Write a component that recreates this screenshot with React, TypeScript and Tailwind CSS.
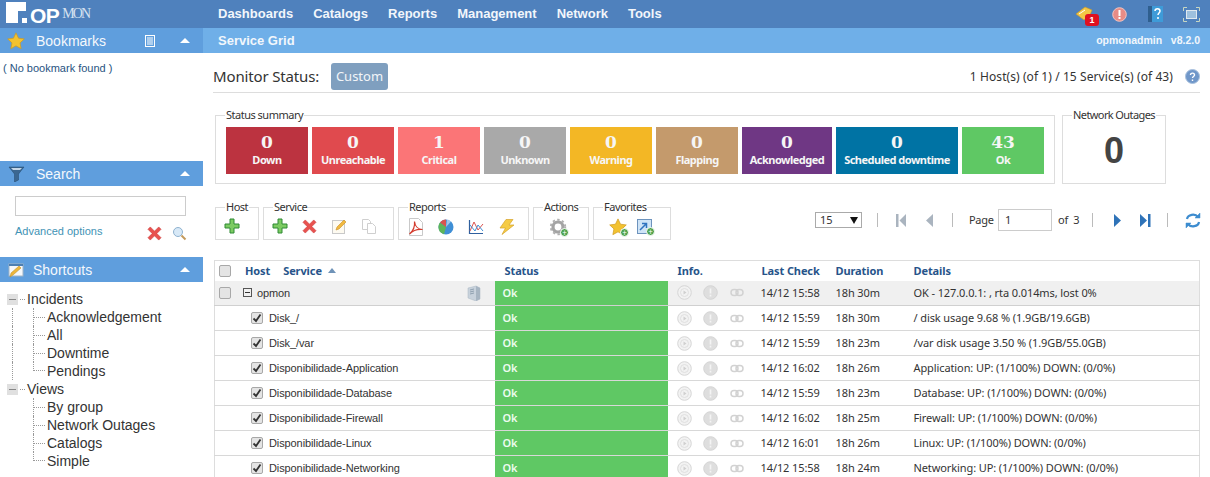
import { ReactNode } from "react";

const sans = "font-['Liberation_Sans',Arial,sans-serif]";
const ui = "font-['Noto_Sans',Tahoma,sans-serif]";

const tiles = [
  { n: "0", label: "Down", bg: "bg-[#bc3340]", w: "w-[82px]" },
  { n: "0", label: "Unreachable", bg: "bg-[#e04a4e]", w: "w-[82px]" },
  { n: "1", label: "Critical", bg: "bg-[#fb7577]", w: "w-[82px]" },
  { n: "0", label: "Unknown", bg: "bg-[#a9a9a9]", w: "w-[82px]" },
  { n: "0", label: "Warning", bg: "bg-[#f3b725]", w: "w-[82px]" },
  { n: "0", label: "Flapping", bg: "bg-[#c49a6c]", w: "w-[82px]" },
  { n: "0", label: "Acknowledged", bg: "bg-[#6f3784]", w: "w-[90px]" },
  { n: "0", label: "Scheduled downtime", bg: "bg-[#0073a4]", w: "w-[122px]" },
  { n: "43", label: "Ok", bg: "bg-[#5fc864]", w: "w-[82px]" },
];

const services = [
  ["Disk_/", "14/12 15:59", "18h 30m", "/ disk usage 9.68 % (1.9GB/19.6GB)"],
  ["Disk_/var", "14/12 15:59", "18h 23m", "/var disk usage 3.50 % (1.9GB/55.0GB)"],
  ["Disponibilidade-Application", "14/12 16:02", "18h 26m", "Application: UP: (1/100%) DOWN: (0/0%)"],
  ["Disponibilidade-Database", "14/12 15:59", "18h 23m", "Database: UP: (1/100%) DOWN: (0/0%)"],
  ["Disponibilidade-Firewall", "14/12 16:02", "18h 25m", "Firewall: UP: (1/100%) DOWN: (0/0%)"],
  ["Disponibilidade-Linux", "14/12 16:01", "18h 26m", "Linux: UP: (1/100%) DOWN: (0/0%)"],
  ["Disponibilidade-Networking", "14/12 15:58", "18h 24m", "Networking: UP: (1/100%) DOWN: (0/0%)"],
];

/* icons */
const Star = ({ s = 18 }: { s?: number }) => (
  <svg width={s} height={s} viewBox="0 0 20 20">
    <path d="M10 1l2.8 5.9 6.4.8-4.7 4.4 1.2 6.4-5.7-3.1-5.7 3.1 1.2-6.4L.8 7.7l6.4-.8z" fill="#f2c230" stroke="#d19a1c" strokeWidth="0.8" />
  </svg>
);
const Plus = () => (
  <svg width="16" height="16" viewBox="0 0 16 16">
    <path d="M6 1h4v5h5v4h-5v5H6v-5H1V6h5z" fill="#7ccb62" stroke="#2f8a34" strokeWidth="1" />
  </svg>
);
const Cross = ({ s = 15 }: { s?: number }) => (
  <svg width={s} height={s} viewBox="0 0 16 16">
    <path d="M3.5 1L8 5.5 12.5 1 15 3.5 10.500 8l4.500 4.500L12.500 15 8 10.500 3.500 15 1 12.500 5.500 8 1 3.500z" fill="#e8524f" stroke="#c93a3a" strokeWidth="0.6" />
  </svg>
);
const Note = () => (
  <svg width="16" height="16" viewBox="0 0 16 16">
    <rect x="1.500" y="2.500" width="12" height="13" fill="#fdfaf0" stroke="#c9c9c9" />
    <path d="M5 12l1-3 7-7 2 2-7 7z" fill="#f1b93f" stroke="#c98f26" strokeWidth="0.6" />
  </svg>
);
const Copy = () => (
  <svg width="16" height="16" viewBox="0 0 16 16" fill="#fff" stroke="#cfcfcf">
    <path d="M1.500 1.500h6l2 2v8h-8z" />
    <path d="M6.500 5.500h5l3 3v7h-8z" />
  </svg>
);
const Pdf = () => (
  <svg width="16" height="18" viewBox="0 0 16 18" fill="none">
    <path d="M1.500 .5h9l4 4v13h-13z" fill="#fff" stroke="#c9c9c9" />
    <path d="M1.500 16C5 13 7 8 6.500 3.500 7 8 10 11.500 14.500 11.500 10 11 5 12.500 1.500 16z" stroke="#d33a2c" strokeWidth="1.200" />
  </svg>
);
const Pie = () => (
  <svg width="16" height="16" viewBox="0 0 16 16">
    <circle cx="8" cy="8" r="7.500" fill="#3f8fd6" />
    <path d="M8 8L2 3.500A7.500 7.500 0 0 0 6 15.300z" fill="#5db55a" />
    <path d="M8 8V.5A7.500 7.500 0 0 0 2 3.500z" fill="#d9534f" />
    <path d="M8 8l1-7.400A7.500 7.500 0 0 1 13 2.500z" fill="#fff" opacity="0.5" />
  </svg>
);
const ChartIcon = () => (
  <svg width="16" height="16" viewBox="0 0 16 16" fill="none">
    <path d="M1.500 1v13.500H15" stroke="#2f5f9e" strokeWidth="1.200" />
    <path d="M2 12L6 3l4 8 5-6" stroke="#d9534f" />
    <path d="M2 6l5 6 3-6 5 6" stroke="#3f8fd6" />
  </svg>
);
const Bolt = () => (
  <svg width="17" height="16" viewBox="0 0 17 16">
    <path d="M8 .5h7L11 6h5L4 15.500 7.500 9H2z" fill="#f5cb45" stroke="#d6a32a" strokeWidth="0.7" />
  </svg>
);
const Badge = ({ color = "#4fa34f" }: { color?: string }) => (
  <span className="absolute right-[-2px] bottom-[-1px] flex h-[9px] w-[9px] items-center justify-center rounded-full border border-white text-[8px] leading-none text-white" style={{ background: color }}>
    +
  </span>
);
const Gear = () => (
  <span className="relative inline-flex">
    <svg width="18" height="18" viewBox="0 0 18 18">
      <circle cx="9" cy="9" r="5" fill="none" stroke="#a4a4a4" strokeWidth="3.200" />
      <circle cx="9" cy="9" r="7.200" fill="none" stroke="#b0b0b0" strokeWidth="2" strokeDasharray="2.400 2.300" />
    </svg>
    <Badge />
  </span>
);
const StarPlus = () => (
  <span className="relative inline-flex">
    <Star />
    <Badge />
  </span>
);
const ImgPlus = () => (
  <span className="relative inline-flex">
    <svg width="16" height="16" viewBox="0 0 16 16">
      <rect x=".5" y=".5" width="14" height="14" fill="#cfe4f7" stroke="#6d93bd" />
      <path d="M3 11l6-6M5 4.500h4.500V9" fill="none" stroke="#2f73c0" strokeWidth="1.500" />
    </svg>
    <Badge />
  </span>
);
const Play = () => (
  <svg width="15" height="15" viewBox="0 0 15 15">
    <circle cx="7.500" cy="7.500" r="6.800" fill="#f2f2f2" stroke="#d6d6d6" />
    <circle cx="7.500" cy="7.500" r="4" fill="none" stroke="#e0e0e0" />
    <path d="M6.500 5.500l3 2-3 2z" fill="#cfcfcf" />
  </svg>
);
const Info = () => (
  <svg width="15" height="15" viewBox="0 0 15 15">
    <circle cx="7.500" cy="7.500" r="6.800" fill="#dedede" stroke="#d4d4d4" />
    <rect x="6.700" y="3.500" width="1.600" height="5" fill="#f4f4f4" />
    <rect x="6.700" y="9.700" width="1.600" height="1.800" fill="#f4f4f4" />
  </svg>
);
const Chain = () => (
  <svg width="14" height="9" viewBox="0 0 14 9" fill="none" stroke="#d2d2d2" strokeWidth="1.500">
    <rect x="1" y="1.500" width="7" height="6" rx="3" />
    <rect x="6" y="1.500" width="7" height="6" rx="3" />
  </svg>
);
const Caret = () => <span className="h-0 w-0 border-x-[5px] border-b-[5px] border-x-transparent border-b-white" />;
const Check = ({ on }: { on?: boolean }) => (
  <span className="flex h-[12px] w-[12px] items-center justify-center rounded-[2px] border border-[#a8a8a8] bg-[#e4e4e4]">
    {on && (
      <svg width="10" height="10" viewBox="0 0 10 10" fill="none">
        <path d="M1.500 5.500L4 8l4.500-6.500" stroke="#333" strokeWidth="1.800" />
      </svg>
    )}
  </span>
);

function SideHead({ icon, title, extra, indent }: { icon: ReactNode; title: string; extra?: ReactNode; indent: string }) {
  return (
    <div className={`flex h-[25px] items-center bg-[#5f9edd] pl-[7px] pr-[13px] text-[14px] text-[#f4f8fc] ${sans}`}>
      <span className="flex w-[18px] justify-center">{icon}</span>
      <span className={`flex-1 pt-px ${indent}`}>{title}</span>
      {extra}
      <Caret />
    </div>
  );
}

function TreeRow({ label, parent, last, trunk }: { label: string; parent?: boolean; last?: boolean; trunk?: boolean }) {
  return (
    <div className="flex h-[18px] items-center">
      {parent ? (
        <>
          <span className="relative ml-[7px] flex h-[11px] w-[11px] items-center justify-center bg-[#e0e0e0]">
            <span className="h-px w-[7px] bg-[#888]" />
          </span>
          <span className="ml-[2px] w-[5px] border-t border-dotted border-[#999]" />
          <span className="ml-[2px]">{label}</span>
        </>
      ) : (
        <>
          <span className={`ml-[12px] h-full w-[21px] ${trunk ? "border-l border-dotted border-[#999]" : ""}`} />
          <span className={`w-[14px] self-start border-l border-dotted border-[#999] ${last ? "h-[9px]" : "flex h-full items-center"}`}>
            {last ? <span className="mt-[8px] block w-[11px] border-t border-dotted border-[#999]" /> : <span className="w-[11px] border-t border-dotted border-[#999]" />}
          </span>
          <span>{label}</span>
        </>
      )}
    </div>
  );
}

function Sidebar() {
  return (
    <aside className={`w-[203px] shrink-0 ${sans}`}>
      <SideHead
        icon={<Star />}
        title="Bookmarks"
        indent="pl-[11px]"
        extra={
          <svg className="mr-[25px]" width="10" height="12" viewBox="0 0 10 12" fill="none" stroke="#fff">
            <rect x=".5" y=".5" width="9" height="11" />
            <path d="M2 3h6M2 5h6M2 7h6M2 9h6" />
          </svg>
        }
      />
      <div className="h-[108px] pl-[3px] pt-[9px] text-[11px] leading-[13px] text-[#27537f]">( No bookmark found )</div>

      <SideHead
        icon={
          <svg width="17" height="16" viewBox="0 0 17 16">
            <path d="M1 1h15l-5.500 7v6l-4 2V8z" fill="#3b6791" stroke="#23486d" strokeWidth="0.5" />
            <path d="M3 2h11l-2 2H5z" fill="#c4d7e8" />
          </svg>
        }
        title="Search"
        indent="pl-[11px]"
      />
      <div className="h-[71px] pl-[15px] pr-[16px] pt-[10px]">
        <div className="mr-px h-[20px] border border-[#ccc] bg-white" />
        <div className="mt-[5px] flex items-center">
          <span className="flex-1 text-[11px] text-[#3f93b5]">Advanced options</span>
          <span className="mr-[10px] mt-[5px] flex">
            <Cross />
          </span>
          <svg className="mt-[5px]" width="15" height="15" viewBox="0 0 15 15" fill="none">
            <circle cx="6" cy="6" r="4.500" fill="#d8e9f7" stroke="#8fb2cf" />
            <path d="M9.500 9.500l4 4" stroke="#c39a5c" strokeWidth="2" />
          </svg>
        </div>
      </div>

      <SideHead
        icon={
          <svg width="16" height="16" viewBox="0 0 16 16">
            <rect x="1" y="2" width="14" height="12" fill="#f5f7fa" stroke="#9fb3c6" />
            <path d="M1 2h14v2H1z" fill="#4d7fb2" />
            <path d="M2 15l1-4 8-7 2 2-8 7z" fill="#eeb63a" stroke="#b98a22" strokeWidth="0.5" />
          </svg>
        }
        title="Shortcuts"
        indent="pl-[8px]"
      />
      <div className="pt-[8px] text-[14px] leading-[18px] text-[#333]">
        <TreeRow label="Incidents" parent />
        <TreeRow label="Acknowledgement" trunk />
        <TreeRow label="All" trunk />
        <TreeRow label="Downtime" trunk />
        <TreeRow label="Pendings" last trunk />
        <TreeRow label="Views" parent />
        <TreeRow label="By group" />
        <TreeRow label="Network Outages" />
        <TreeRow label="Catalogs" />
        <TreeRow label="Simple" last />
      </div>
    </aside>
  );
}

function Group({ title, width, gap, pad, children }: { title: string; width: string; gap: string; pad: string; children: ReactNode }) {
  return (
    <fieldset className={`h-[40px] border border-[#ddd] ${width}`}>
      <legend className="ml-[9px] px-[1px] text-[11px] leading-[14px] tracking-[-0.5px] text-[#333]">{title}</legend>
      <div className={`flex items-center pt-[4px] ${gap} ${pad}`}>{children}</div>
    </fieldset>
  );
}

const Sep = ({ className }: { className: string }) => <span className={`block h-[14px] w-px bg-[#bbb] ${className}`} />;

function Pager() {
  return (
    <div className="flex flex-1 items-center pl-[144px] pt-[9px] text-[11px] text-[#333]">
      <div className="flex h-[16px] w-[47px] items-center justify-between border border-[#aaa] pl-[4px] pr-[3px]">
        <span>15</span>
        <span className="h-0 w-0 border-x-[4px] border-t-[7px] border-x-transparent border-t-[#111]" />
      </div>
      <Sep className="ml-[15px]" />
      <svg className="ml-[18px]" width="11" height="13" viewBox="0 0 11 13">
        <rect x="0" y="0" width="2.500" height="13" fill="#aab4bf" />
        <path d="M10 0v13L3.500 6.500z" fill="#aab4bf" />
      </svg>
      <svg className="ml-[19px]" width="8" height="13" viewBox="0 0 8 13">
        <path d="M7 0v13L0 6.500z" fill="#aab4bf" />
      </svg>
      <Sep className="ml-[18px]" />
      <span className="ml-[16px] w-[29px] tracking-[-0.3px]">Page</span>
      <div className="flex h-[22px] w-[54px] items-center border border-[#ccc] pl-[6px]">1</div>
      <span className="ml-[6px] w-[34px] tracking-[-0.2px]">of&nbsp; 3</span>
      <Sep className="" />
      <svg className="ml-[20px]" width="8" height="13" viewBox="0 0 8 13">
        <path d="M1 0v13l7-6.500z" fill="#2f73b8" />
      </svg>
      <svg className="ml-[19px]" width="11" height="13" viewBox="0 0 11 13">
        <path d="M0 0v13l7-6.500z" fill="#2f73b8" />
        <rect x="8" y="0" width="2.500" height="13" fill="#2f73b8" />
      </svg>
      <Sep className="ml-[16px]" />
      <svg className="ml-[17px]" width="16" height="17" viewBox="0 0 16 17" fill="none" stroke="#3d8ccf" strokeWidth="2.200">
        <path d="M2 7a6 5 0 0 1 11-2" />
        <path d="M14 10a6 5 0 0 1-11 2" />
        <path d="M15 1v5h-5z" fill="#3d8ccf" strokeWidth="0.5" />
        <path d="M1 16v-5h5z" fill="#3d8ccf" strokeWidth="0.5" />
      </svg>
    </div>
  );
}

function ServiceRow({ row }: { row: string[] }) {
  return (
    <tr className="h-[25px] border-b border-[#d8d8d8]">
      <td className="p-0">
        <div className="flex items-center pl-[36px]">
          <Check on />
          <span className={`ml-[6px] ${sans}`}>{row[0]}</span>
        </div>
      </td>
      <StatusCell />
      <InfoCell />
      <td className="p-0">{row[1]}</td>
      <td className="p-0">{row[2]}</td>
      <td className="p-0">{row[3]}</td>
    </tr>
  );
}

const StatusCell = () => <td className="bg-[#5fc864] p-0 pl-[8px] font-semibold text-[#eefbef]">Ok</td>;

const InfoCell = () => (
  <td className="p-0">
    <div className="flex items-center pl-[9px]">
      <Play />
      <span className="ml-[11px] flex"><Info /></span>
      <span className="ml-[12px] flex"><Chain /></span>
    </div>
  </td>
);

function ServiceTable() {
  return (
    <table className="ml-px mt-[20px] w-[986px] table-fixed border-x border-t border-[#ddd] text-[11px] tracking-[-0.1px] text-[#333]">
      <colgroup>
        <col className="w-[280px]" />
        <col className="w-[173px]" />
        <col className="w-[93px]" />
        <col className="w-[75px]" />
        <col className="w-[78px]" />
        <col />
      </colgroup>
      <thead>
        <tr className="h-[20px] text-left text-[#27548a]">
          <th className="p-0">
            <div className="flex items-center pl-[4px]">
              <Check />
              <span className="ml-[14px]">Host</span>
              <span className="ml-[13px]">Service</span>
              <span className="ml-[6px] h-0 w-0 border-x-[4px] border-b-[5px] border-x-transparent border-b-[#6f93b8]" />
            </div>
          </th>
          <th className="p-0 pl-[10px]">Status</th>
          <th className="p-0 pl-[10px]">Info.</th>
          <th className="p-0 pl-px">Last Check</th>
          <th className="p-0">Duration</th>
          <th className="p-0">Details</th>
        </tr>
      </thead>
      <tbody>
        <tr className="h-[25px] border-b border-[#d0d0d0] bg-[#f0f0f0]">
          <td className="p-0">
            <div className="flex items-center pl-[4px]">
              <Check />
              <span className="ml-[12px] flex h-[9px] w-[9px] items-center justify-center border border-[#555]">
                <span className="h-px w-[5px] bg-[#333]" />
              </span>
              <span className={`ml-[5px] flex-1 ${sans}`}>opmon</span>
              <svg className="mr-[14px]" width="14" height="16" viewBox="0 0 14 16">
                <path d="M1 3l8-2 4 2v11l-4 2-8-3z" fill="#c8d2dc" stroke="#a9b6c2" strokeWidth="0.5" />
                <path d="M9 1v15l4-2V3z" fill="#a7b5c2" />
                <path d="M3 5l4-1M3 7l4-1M3 9l4-1" stroke="#8fa0b0" />
              </svg>
            </div>
          </td>
          <StatusCell />
          <InfoCell />
          <td className="p-0">14/12 15:58</td>
          <td className="p-0">18h 30m</td>
          <td className="p-0">OK - 127.0.0.1: , rta 0.014ms, lost 0%</td>
        </tr>
        {services.map((row) => (
          <ServiceRow key={row[0]} row={row} />
        ))}
      </tbody>
    </table>
  );
}

export default function App() {
  return (
    <div className={`h-[477px] w-[1210px] overflow-hidden bg-white ${ui}`}>
      {/* top bar */}
      <header className={`flex h-[28px] items-center bg-[#4f81bd] ${sans}`}>
        <div className="flex h-full w-[218px] items-start pl-[6px] pt-px">
          <svg width="22" height="23" viewBox="0 0 22 23">
            <path d="M0 1h20v9h-8v12H0z" fill="#fff" />
            <rect x="16" y="17" width="5" height="5" fill="#fff" />
          </svg>
          <span className="ml-[2px] mt-[3px] text-[21px] font-bold leading-[24px] tracking-[-0.5px] text-white">OP</span>
          <span className="ml-[3px] mt-[5px] font-['Liberation_Serif',serif] text-[14px] leading-[16px] tracking-[-2px] text-[#d5e2f0]">MON</span>
        </div>
        <nav className="flex flex-1 gap-[20px] text-[13px] font-bold text-[#f2f6fb]">
          {["Dashboards", "Catalogs", "Reports", "Management", "Network", "Tools"].map((n) => (
            <span key={n}>{n}</span>
          ))}
        </nav>
        <div className="flex items-center pr-[10px]">
          <span className="relative mr-[19px] flex">
            <svg width="18" height="16" viewBox="0 0 18 16">
              <path d="M1 8l9-7 7 3-2 5-6 5z" fill="#f3c744" stroke="#c9962a" strokeWidth="0.6" />
              <path d="M4 8l6-4" stroke="#fff" />
            </svg>
            <span className="absolute bottom-[-4px] right-[-6px] flex h-[12px] w-[14px] items-center justify-center rounded-[3px] bg-[#e01020] text-[9px] font-bold leading-none text-white">1</span>
          </span>
          <svg className="mr-[21px]" width="15" height="15" viewBox="0 0 15 15">
            <circle cx="7.500" cy="7.500" r="6.800" fill="#e78c86" stroke="#f4c4bf" />
            <rect x="6.500" y="3" width="2" height="6" fill="#fff" />
            <rect x="6.500" y="10" width="2" height="2" fill="#fff" />
          </svg>
          <svg className="mr-[20px]" width="15" height="16" viewBox="0 0 15 16">
            <path d="M0 0h4v16H0z" fill="#2f5f8f" />
            <path d="M4 0h11v16H4z" fill="#3e9bd8" />
            <path d="M7 5c0-3 5-3 5 0 0 2-2 2-2 4M10 11v2" fill="none" stroke="#fff" strokeWidth="1.500" />
          </svg>
          <svg width="17" height="15" viewBox="0 0 17 15" fill="none">
            <path d="M.5 4V.5H4M13 .5h3.500V4M.5 11v3.500H4M13 14.500h3.500V11" stroke="#c7d6c2" />
            <rect x="3.500" y="3.500" width="10" height="8" fill="#9dc0de" stroke="#dfe8ef" />
          </svg>
        </div>
      </header>

      <div className="flex">
        <Sidebar />
        <main className="min-w-0 flex-1">
          <div className={`flex h-[25px] items-center justify-between bg-[#6fafe8] pl-[15px] pr-[10px] font-bold text-[#f2f7fc] ${sans}`}>
            <span className="text-[13px]">Service Grid</span>
            <span className="text-[10.500px]">opmonadmin &nbsp; v8.2.0</span>
          </div>

          <div className="pl-[10px] pr-[10px]">
            <div className="flex h-[40px] items-center border-b border-[#ddd] pt-[8px]">
              <span className="w-[107px] whitespace-nowrap text-[15px] tracking-[-0.15px] text-[#333]">Monitor Status:</span>
              <span className="ml-[11px] flex h-[27px] w-[57px] items-center justify-center rounded-[3px] bg-[#7f9fbf] text-[13px] text-[#f2f5f8]">Custom</span>
              <span className="ml-auto text-[12px] tracking-[0.08px] text-[#333]">1 Host(s) (of 1) / 15 Service(s) (of 43)</span>
              <svg className="ml-[12px]" width="15" height="15" viewBox="0 0 15 15">
                <circle cx="7.500" cy="7.500" r="7" fill="#7097c9" stroke="#a8c0dd" />
                <path d="M5.500 6c0-2.500 4-2.500 4 0 0 1.500-2 1.500-2 3M7.500 10.500v1.500" fill="none" stroke="#fff" strokeWidth="1.400" />
              </svg>
            </div>

            <div className="ml-[2px] mt-[15px] flex gap-[7px]">
              <fieldset className="h-[76px] w-[840px] border border-[#ddd]">
                <legend className="ml-[9px] px-[1px] text-[11px] leading-[14px] tracking-[-0.5px] text-[#333]">Status summary</legend>
                <div className="flex gap-[4px] pl-[10px] pt-[5px]">
                  {tiles.map((t) => (
                    <div key={t.label} className={`flex h-[47px] flex-col items-center pt-[5px] text-[#f6f6f6] ${t.bg} ${t.w}`}>
                      <span className="font-['DejaVu_Serif',serif] text-[17px] font-bold leading-[20px]">{t.n}</span>
                      <span className={`whitespace-nowrap text-[11px] font-bold leading-[15px] tracking-[-0.5px] ${ui}`}>{t.label}</span>
                    </div>
                  ))}
                </div>
              </fieldset>
              <fieldset className="h-[76px] w-[104px] border border-[#ddd] text-center">
                <legend className="mx-auto px-[1px] text-[11px] leading-[14px] tracking-[-0.6px] text-[#333]">Network Outages</legend>
                <div className={`pt-[9px] text-[36px] font-bold leading-[40px] text-[#444] ${sans}`}>0</div>
              </fieldset>
            </div>

            <div className="ml-[2px] mt-[16px] flex items-start">
              <div className="flex gap-[4px]">
                <Group title="Host" width="w-[44px]" gap="" pad="pl-[8px]">
                  <Plus />
                </Group>
                <Group title="Service" width="w-[131px]" gap="gap-[14px]" pad="pl-[8px]">
                  <Plus /><Cross /><Note /><Copy />
                </Group>
                <Group title="Reports" width="w-[131px]" gap="gap-[14px]" pad="pl-[9px]">
                  <Pdf /><Pie /><ChartIcon /><Bolt />
                </Group>
                <Group title="Actions" width="w-[56px]" gap="" pad="pl-[15px]">
                  <Gear />
                </Group>
                <Group title="Favorites" width="w-[78px]" gap="gap-[10px]" pad="pl-[15px]">
                  <StarPlus /><ImgPlus />
                </Group>
              </div>
              <Pager />
            </div>

            <ServiceTable />
          </div>
        </main>
      </div>
    </div>
  );
}
